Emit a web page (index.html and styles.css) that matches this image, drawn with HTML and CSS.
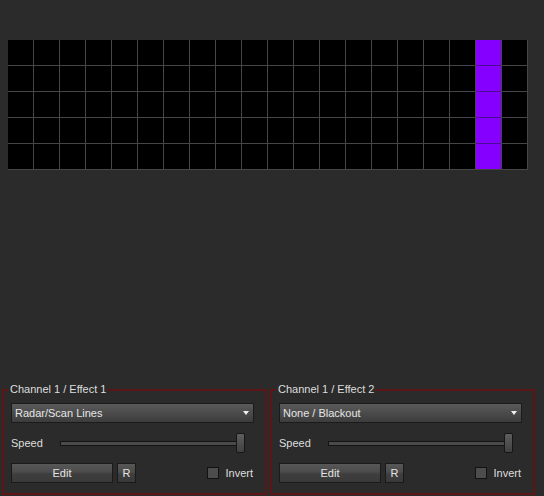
FILE: index.html
```html
<!DOCTYPE html>
<html>
<head>
<meta charset="utf-8">
<link rel="stylesheet" href="styles.css">
</head>
<body>
<div class="matrix">
  <div class="c"></div><div class="c"></div><div class="c"></div><div class="c"></div><div class="c"></div><div class="c"></div><div class="c"></div><div class="c"></div><div class="c"></div><div class="c"></div><div class="c"></div><div class="c"></div><div class="c"></div><div class="c"></div><div class="c"></div><div class="c"></div><div class="c"></div><div class="c"></div><div class="c on"></div><div class="c"></div>
  <div class="c"></div><div class="c"></div><div class="c"></div><div class="c"></div><div class="c"></div><div class="c"></div><div class="c"></div><div class="c"></div><div class="c"></div><div class="c"></div><div class="c"></div><div class="c"></div><div class="c"></div><div class="c"></div><div class="c"></div><div class="c"></div><div class="c"></div><div class="c"></div><div class="c on"></div><div class="c"></div>
  <div class="c"></div><div class="c"></div><div class="c"></div><div class="c"></div><div class="c"></div><div class="c"></div><div class="c"></div><div class="c"></div><div class="c"></div><div class="c"></div><div class="c"></div><div class="c"></div><div class="c"></div><div class="c"></div><div class="c"></div><div class="c"></div><div class="c"></div><div class="c"></div><div class="c on"></div><div class="c"></div>
  <div class="c"></div><div class="c"></div><div class="c"></div><div class="c"></div><div class="c"></div><div class="c"></div><div class="c"></div><div class="c"></div><div class="c"></div><div class="c"></div><div class="c"></div><div class="c"></div><div class="c"></div><div class="c"></div><div class="c"></div><div class="c"></div><div class="c"></div><div class="c"></div><div class="c on"></div><div class="c"></div>
  <div class="c"></div><div class="c"></div><div class="c"></div><div class="c"></div><div class="c"></div><div class="c"></div><div class="c"></div><div class="c"></div><div class="c"></div><div class="c"></div><div class="c"></div><div class="c"></div><div class="c"></div><div class="c"></div><div class="c"></div><div class="c"></div><div class="c"></div><div class="c"></div><div class="c on last"></div><div class="c"></div>
</div>

<div class="panels">
  <fieldset class="group">
    <legend class="title">Channel 1 / Effect 1</legend>
    <div class="select"><span>Radar/Scan Lines</span><span class="arrow"></span></div>
    <div class="row speed">
      <span class="lbl">Speed</span>
      <div class="slider"><div class="track"></div><div class="thumb"></div></div>
    </div>
    <div class="row actions">
      <div class="btn edit">Edit</div>
      <div class="btn r">R</div>
      <div class="check"><span class="box"></span><span>Invert</span></div>
    </div>
  </fieldset>
  <fieldset class="group">
    <legend class="title">Channel 1 / Effect 2</legend>
    <div class="select"><span>None / Blackout</span><span class="arrow"></span></div>
    <div class="row speed">
      <span class="lbl">Speed</span>
      <div class="slider"><div class="track"></div><div class="thumb"></div></div>
    </div>
    <div class="row actions">
      <div class="btn edit">Edit</div>
      <div class="btn r">R</div>
      <div class="check"><span class="box"></span><span>Invert</span></div>
    </div>
  </fieldset>
</div>
</body>
</html>
```

FILE: styles.css
```css
html, body {
  margin: 0;
  padding: 0;
  background: #2b2b2b;
}
body {
  width: 544px;
  height: 496px;
  overflow: hidden;
  font-family: "Liberation Sans", Arial, sans-serif;
  font-size: 11px;
  color: #dedede;
}

.matrix {
  display: grid;
  grid-template-columns: repeat(20, 25px);
  grid-auto-rows: 25px;
  gap: 1px;
  width: fit-content;
  background: #454545;
  padding: 0 1px 1px 0;
  margin: 40px 0 0 8px;
}
.c {
  background: #000;
}
.c.on {
  background: #8600ff;
  box-shadow: 0 1px 0 #4c0c92;
}
.c.on.last {
  box-shadow: none;
}

.panels {
  display: flex;
  gap: 3px;
  padding-left: 2px;
  margin-top: 213px;
}

.group {
  box-sizing: border-box;
  width: 265px;
  margin: 0;
  min-width: 0;
  border: 2px solid #5e1414;
  padding: 7px 11px 10px 7px;
}
.title {
  padding: 0 2px;
  margin-left: -3px;
  line-height: 13px;
  font-size: 11px;
  color: #dedede;
}

.select {
  box-sizing: border-box;
  height: 20px;
  border: 1px solid #1b1b1b;
  background: linear-gradient(#5a5a5a, #3c3c3c);
  display: flex;
  align-items: center;
  justify-content: space-between;
  padding: 0 4px 0 3px;
  color: #e6e6e6;
}
.arrow {
  width: 0;
  height: 0;
  border-left: 3.5px solid transparent;
  border-right: 3.5px solid transparent;
  border-top: 4px solid #f0f0f0;
}

.row {
  display: flex;
  align-items: center;
  height: 20px;
  margin-top: 10px;
}
.lbl {
  width: 49px;
}
.slider {
  display: flex;
  align-items: center;
  height: 20px;
}
.track {
  box-sizing: border-box;
  width: 180px;
  height: 5px;
  border: 1px solid #141414;
  background: #4a4a4a;
}
.thumb {
  box-sizing: border-box;
  width: 9px;
  height: 20px;
  margin-left: -4px;
  border: 1px solid #161616;
  border-radius: 2px;
  background: linear-gradient(#5e5e5e, #414141);
}

.btn {
  box-sizing: border-box;
  height: 20px;
  border: 1px solid #1a1a1a;
  background: linear-gradient(#575757 0%, #4b4b4b 45%, #3e3e3e 55%, #393939 100%);
  color: #e4e4e4;
  display: flex;
  align-items: center;
  justify-content: center;
}
.edit {
  width: 102px;
}
.r {
  width: 19px;
  margin-left: 4px;
}
.check {
  margin-left: auto;
  margin-right: 1px;
  display: flex;
  align-items: center;
  gap: 6px;
}
.box {
  box-sizing: border-box;
  width: 12px;
  height: 12px;
  border: 1px solid #121212;
  background: #4d4d4d;
}
```
